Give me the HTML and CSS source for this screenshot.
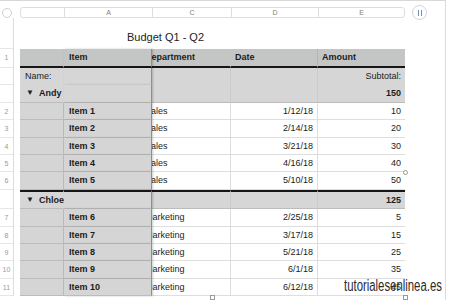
FILE: index.html
```html
<!DOCTYPE html>
<html lang="es">
  <head>
    <meta charset="UTF-8" />
    <title>Budget Q1 - Q2</title>
    <link rel="stylesheet" href="styles.css">
  </head>

  <body>
    <div class="page">
      <!-- barra de columnas -->
      <div class="top">
        <span class="dot"></span>
        <div class="colbar">
          <span class="a"></span>
          <span class="b">A</span>
          <span class="c">C</span>
          <span class="d">D</span>
          <span class="e">E</span>
        </div>
        <span class="pause"><i></i><i></i></span>
      </div>

      <div class="sheet">
        <!-- numeros de fila -->
        <div class="rowheads">
          <div class="rh tall"></div>
          <div class="rh head">1</div>
          <div class="rh"></div>
          <div class="rh"></div>
          <div class="rh">2</div>
          <div class="rh">3</div>
          <div class="rh">4</div>
          <div class="rh">5</div>
          <div class="rh">6</div>
          <div class="rh sep"></div>
          <div class="rh">7</div>
          <div class="rh">8</div>
          <div class="rh">9</div>
          <div class="rh">10</div>
          <div class="rh">11</div>
        </div>

        <div class="main">
          <div class="title">Budget Q1 - Q2</div>

          <div class="row head">
            <div class="cell a"></div>
            <div class="cell b">Item</div>
            <div class="cell c">Department</div>
            <div class="cell d">Date</div>
            <div class="cell e">Amount</div>
          </div>

          <div class="row grp names">
            <div class="cell a">Name:</div>
            <div class="cell b"></div>
            <div class="cell c"></div>
            <div class="cell d"></div>
            <div class="cell e r">Subtotal:</div>
          </div>
          <div class="row grp">
            <div class="cell a"><span class="tri">▼</span><b>Andy</b></div>
            <div class="cell b"></div>
            <div class="cell c"></div>
            <div class="cell d"></div>
            <div class="cell e r"><b>150</b></div>
          </div>

          <div class="row">
            <div class="cell a"></div><div class="cell b">Item 1</div><div class="cell c">Sales</div>
            <div class="cell d r">1/12/18</div><div class="cell e r">10</div>
          </div>
          <div class="row">
            <div class="cell a"></div><div class="cell b">Item 2</div><div class="cell c">Sales</div>
            <div class="cell d r">2/14/18</div><div class="cell e r">20</div>
          </div>
          <div class="row">
            <div class="cell a"></div><div class="cell b">Item 3</div><div class="cell c">Sales</div>
            <div class="cell d r">3/21/18</div><div class="cell e r">30</div>
          </div>
          <div class="row">
            <div class="cell a"></div><div class="cell b">Item 4</div><div class="cell c">Sales</div>
            <div class="cell d r">4/16/18</div><div class="cell e r">40</div>
          </div>
          <div class="row">
            <div class="cell a"></div><div class="cell b">Item 5</div><div class="cell c">Sales</div>
            <div class="cell d r">5/10/18</div><div class="cell e r">50</div>
          </div>

          <div class="row grp sep">
            <div class="cell a"><span class="tri">▼</span><b>Chloe</b></div>
            <div class="cell b"></div>
            <div class="cell c"></div>
            <div class="cell d"></div>
            <div class="cell e r"><b>125</b></div>
          </div>

          <div class="row">
            <div class="cell a"></div><div class="cell b">Item 6</div><div class="cell c">Marketing</div>
            <div class="cell d r">2/25/18</div><div class="cell e r">5</div>
          </div>
          <div class="row">
            <div class="cell a"></div><div class="cell b">Item 7</div><div class="cell c">Marketing</div>
            <div class="cell d r">3/17/18</div><div class="cell e r">15</div>
          </div>
          <div class="row">
            <div class="cell a"></div><div class="cell b">Item 8</div><div class="cell c">Marketing</div>
            <div class="cell d r">5/21/18</div><div class="cell e r">25</div>
          </div>
          <div class="row">
            <div class="cell a"></div><div class="cell b">Item 9</div><div class="cell c">Marketing</div>
            <div class="cell d r">6/1/18</div><div class="cell e r">35</div>
          </div>
          <div class="row">
            <div class="cell a"></div><div class="cell b">Item 10</div><div class="cell c">Marketing</div>
            <div class="cell d r">6/12/18</div><div class="cell e r">45</div>
          </div>
        </div>
      </div>

      <!-- tiradores de seleccion -->
      <span class="handle round" style="left:403px; top:169px"></span>
      <span class="handle" style="left:210px; top:294px"></span>
      <span class="handle" style="left:403px; top:294px"></span>

      <div class="mark">tutorialesenlinea.es</div>
    </div>
  </body>
</html>
```

FILE: styles.css
```css
* {
    box-sizing: border-box;
    margin: 0;
    padding: 0;
}
body {
    font-family: "Liberation Sans", Arial, sans-serif;
    color: #1c1c1c;
    background-color: #fff;
    width: 450px;
    height: 300px;
    overflow: hidden;
}
.page {
    position: relative;
    width: 446px;
    height: 300px;
    border-top: 1px solid #d8d8d8;
    border-right: 1px solid #dcdcdc;
    overflow: hidden;
}

/* barra superior */
.top {
    display: flex;
    align-items: center;
    height: 11px;
    margin-top: 6px;
}
.dot {
    width: 10px;
    height: 10px;
    margin-left: 2px;
    margin-right: 8px;
    border: 1px solid #cfcfcf;
    border-radius: 50%;
}
.colbar {
    display: flex;
    width: 385px;
    height: 11px;
    border: 1px solid #dedede;
    border-radius: 3px;
    font-size: 7px;
    color: #808080;
}
.colbar span {
    text-align: center;
    line-height: 9px;
    border-left: 1px solid #dedede;
}
.colbar .a { width: 43px; border-left: none; }
.colbar .b { width: 88px; }
.colbar .c { width: 79px; }
.colbar .d { width: 87px; }
.colbar .e { width: 86px; }
.pause {
    display: flex;
    justify-content: center;
    align-items: center;
    gap: 2px;
    width: 15px;
    height: 15px;
    margin-left: 7px;
    border: 1px solid #c9d5df;
    border-radius: 50%;
}
.pause i {
    width: 1px;
    height: 6px;
    background-color: #6d93bd;
}

/* hoja */
.sheet {
    display: flex;
}
.rowheads {
    width: 14px;
    margin-right: 6px;
    border-right: 1px solid #dddddd;
}
.rh {
    height: 17.4px;
    border-bottom: 1px solid #e6e6e6;
    font-size: 7px;
    color: #9a9a9a;
    text-align: center;
    line-height: 17px;
}
.rh.tall {
    height: 31px;
    border-top-right-radius: 5px;
}
.rh.head { height: 19px; }
.rh.sep { height: 19.4px; }

.main {
    width: 385px;
}
.title {
    height: 31px;
    padding-top: 12px;
    padding-left: 107px;
    font-size: 11px;
    line-height: 14px;
    color: #222;
}

.row {
    display: flex;
    height: 17.4px;
}
.cell {
    height: 100%;
    padding: 0 4px;
    font-size: 9px;
    line-height: 16.4px;
    white-space: nowrap;
    overflow: hidden;
    background-color: #fff;
    border-right: 1px solid #dedede;
    border-bottom: 1px solid #dedede;
}
.cell.a { width: 44px; padding-left: 5px; }
.cell.b { width: 88px; padding-left: 5px; }
.cell.c { width: 79px; padding-left: 0; text-indent: -7px; }
.cell.d { width: 87px; }
.cell.e { width: 87px; border-right: none; }
.r { text-align: right; }

/* columnas fijas */
.cell.a, .cell.b {
    background-color: #d5d5d5;
    border-color: #bcbcbc;
}
.cell.b {
    position: relative;
    z-index: 1;
    font-weight: bold;
    border-right: 1px solid #8e8e8e;
    box-shadow: 1px 0 2px rgba(0, 0, 0, 0.2);
}

/* encabezado */
.row.head { height: 19px; }
.row.head .cell {
    background-color: #c4c6c6;
    font-weight: bold;
    border-bottom: 2px solid #161616;
    border-right-color: #c4c6c6;
    line-height: 17px;
}
.row.head .cell.d { border-right-color: #b3b5b5; }
.row.head .cell.b { border-right-color: #8e8e8e; }

/* filas de grupo */
.row.grp .cell {
    background-color: #d6d6d6;
    border-bottom-color: #bcbcbc;
    border-right-color: #cbcbcb;
}
.row.grp .cell.a {
    overflow: visible;
    border-right-color: #d6d6d6;
}
.row.grp .cell.b { border-right-color: #8e8e8e; }
.row.names .cell { border-bottom-color: #d6d6d6; }
.tri {
    display: inline-block;
    font-size: 8px;
    margin-left: 1px;
    margin-right: 5px;
    vertical-align: 1px;
}
.row.sep { height: 19.4px; }
.row.sep .cell {
    border-top: 2px solid #161616;
}

/* tiradores */
.handle {
    position: absolute;
    width: 5px;
    height: 5px;
    background-color: #fff;
    border: 1px solid #9a9a9a;
}
.handle.round {
    border-radius: 50%;
}

.mark {
    position: absolute;
    left: 344px;
    top: 276px;
    font-size: 16px;
    color: #2b2b2b;
    transform: scaleX(0.71);
    transform-origin: left top;
    white-space: nowrap;
}
```
